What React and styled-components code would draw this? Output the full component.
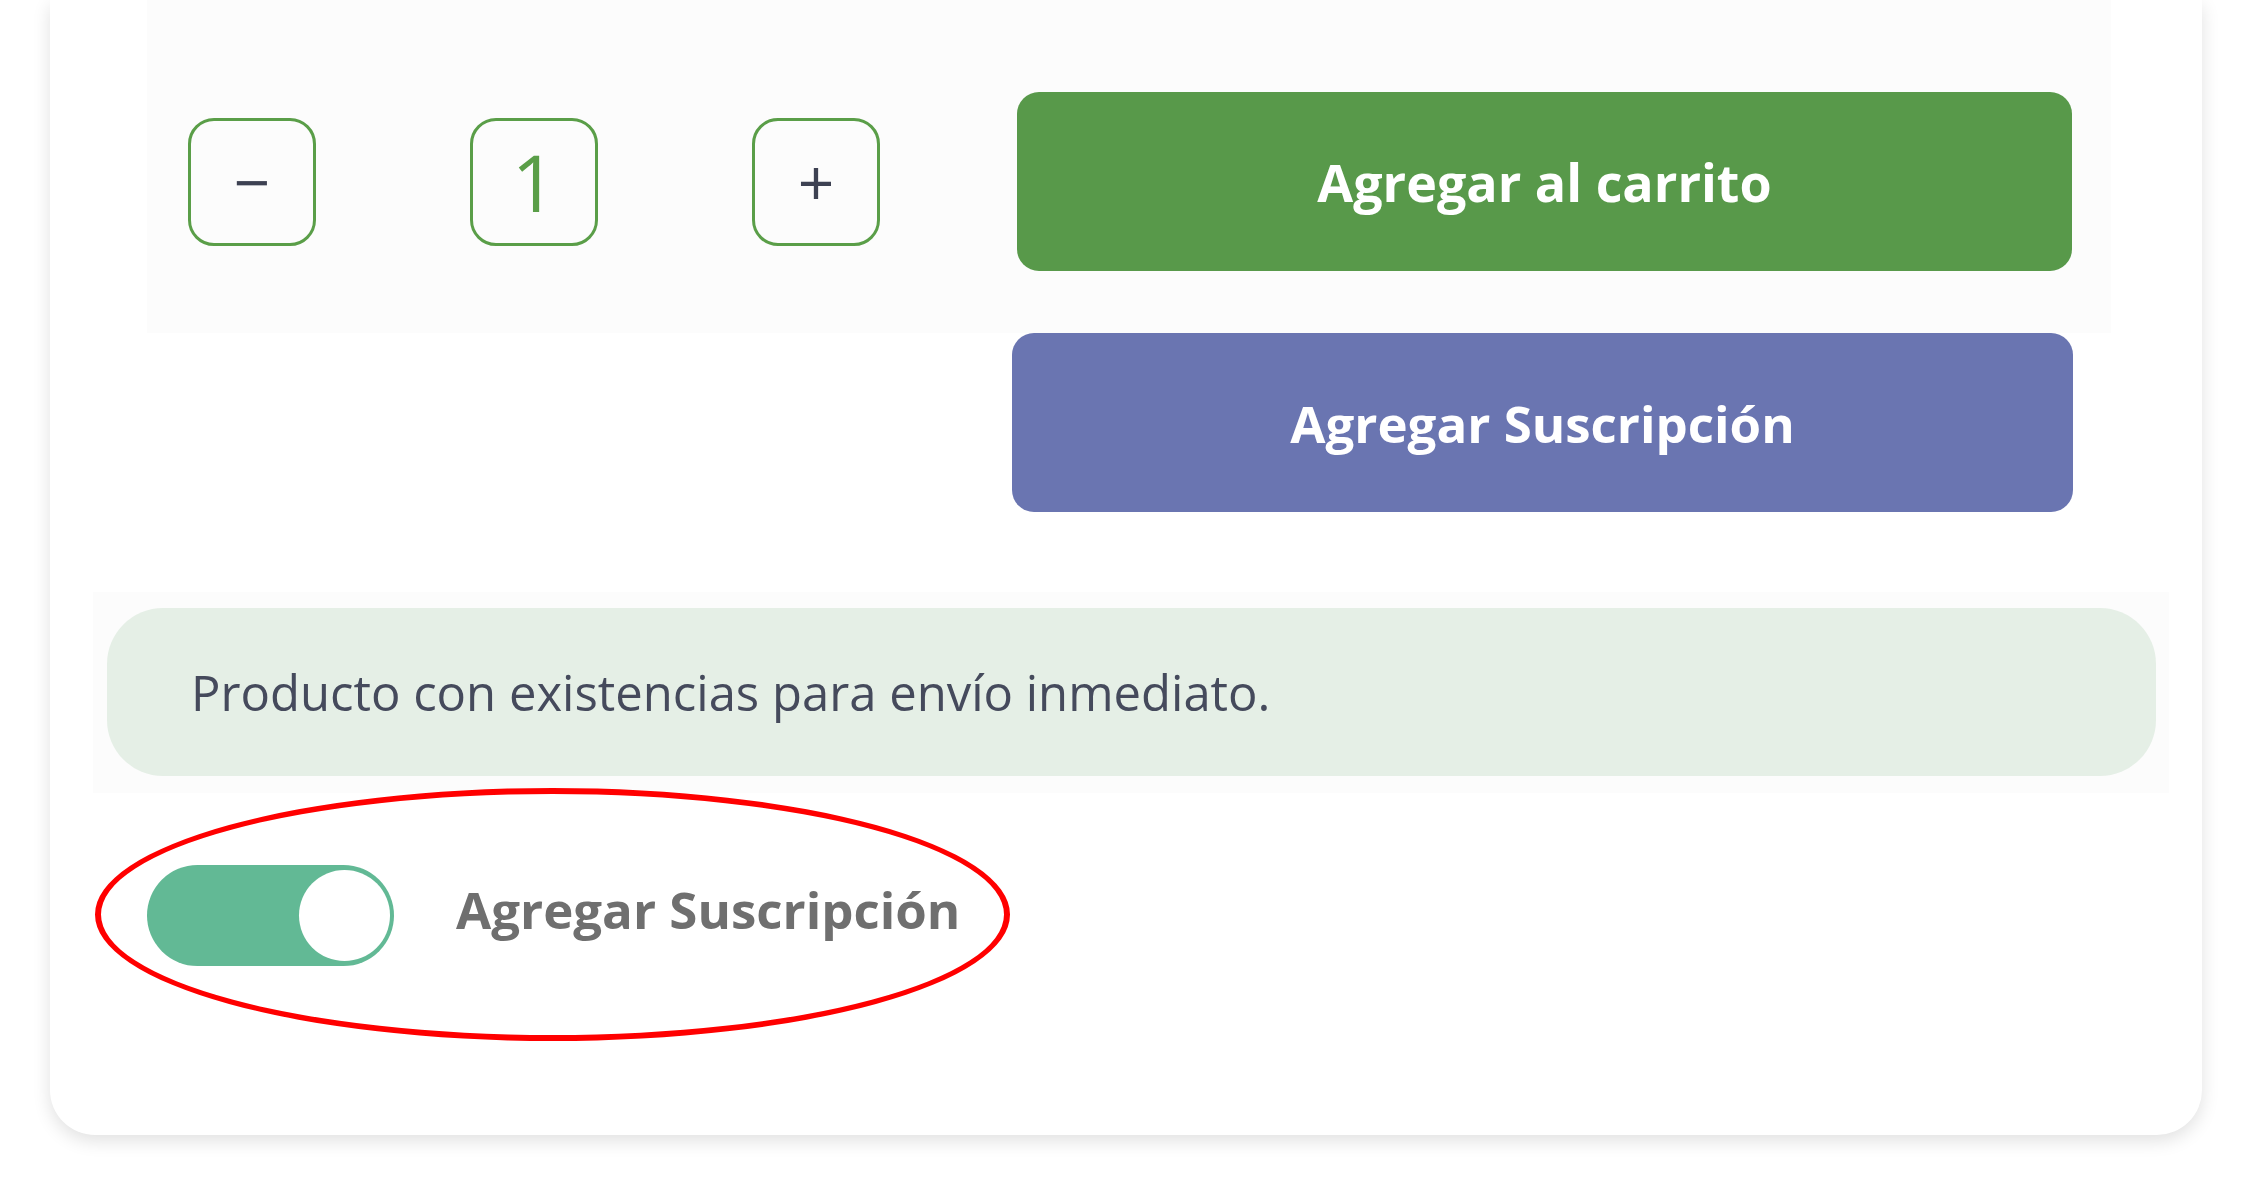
import React from 'react';
import styled, { createGlobalStyle } from 'styled-components';

const GlobalStyle = createGlobalStyle`
  body {
    margin: 0;
    background: #fff;
    font-family: "Open Sans", "Liberation Sans", sans-serif;
  }
`;

const Page = styled.div`
  width: 2258px;
  height: 1200px;
  overflow: hidden;
  background: #fff;
`;

const Card = styled.div`
  position: relative;
  margin-left: 50px;
  width: 2152px;
  padding-bottom: 169px;
  background: #fff;
  border-radius: 0 0 45px 45px;
  box-shadow: 0 6px 18px rgba(0, 0, 0, 0.12);
`;

const TopPanel = styled.div`
  margin-left: 97px;
  width: 1964px;
  height: 333px;
  box-sizing: border-box;
  padding: 92px 39px 0 41px;
  background: #fcfcfc;
  display: flex;
  align-items: flex-start;
`;

const QtyRow = styled.div`
  height: 179px;
  display: flex;
  align-items: center;
  gap: 154px;
`;

const QtyBox = styled.div`
  width: 128px;
  height: 128px;
  box-sizing: border-box;
  border: 3px solid #5a9e48;
  border-radius: 26px;
  display: flex;
  align-items: center;
  justify-content: center;
  color: ${p => (p.$value ? '#5a9e48' : '#3d4152')};
  font-size: ${p => (p.$value ? '78px' : '64px')};
  font-weight: 400;
  line-height: 1;
`;

const Button = styled.button`
  width: ${p => p.$width}px;
  height: 179px;
  border: none;
  border-radius: 22px;
  background: ${p => p.$bg};
  color: #fff;
  font-family: "Open Sans", "Liberation Sans", sans-serif;
  font-weight: 700;
  font-size: ${p => p.$size}px;
  display: flex;
  align-items: center;
  justify-content: center;
  padding: 0;
`;

const CartButton = styled(Button)`
  margin-left: auto;
`;

const SubRow = styled.div`
  display: flex;
  justify-content: flex-end;
  padding-right: 129px;
`;

const InfoOuter = styled.div`
  margin: 80px 0 0 43px;
  width: 2076px;
  box-sizing: border-box;
  padding: 16px 13px 17px 14px;
  background: #fcfcfc;
`;

const InfoBox = styled.div`
  height: 168px;
  box-sizing: border-box;
  padding-left: 84px;
  border-radius: 56px;
  background: #e5efe6;
  display: flex;
  align-items: center;
  color: #454a5c;
  font-size: 49px;
`;

const ToggleRow = styled.div`
  margin-top: 72px;
  padding-left: 97px;
  display: flex;
  align-items: center;
  gap: 62px;
`;

const Switch = styled.div`
  width: 247px;
  height: 101px;
  box-sizing: border-box;
  border-radius: 51px;
  background: #62b995;
  display: flex;
  align-items: center;
  justify-content: flex-end;
  padding-right: 4px;
`;

const Knob = styled.div`
  width: 91px;
  height: 91px;
  border-radius: 50%;
  background: #fff;
`;

const ToggleLabel = styled.span`
  color: #6f6f6f;
  font-weight: 700;
  font-size: 51px;
  margin-bottom: 14px;
`;

const Highlight = styled.div`
  position: absolute;
  left: 45px;
  top: 788px;
  width: 915px;
  height: 253px;
  box-sizing: border-box;
  border: 6px solid #ff0000;
  border-radius: 50%;
  pointer-events: none;
`;

export default function App() {
  return (
    <Page>
      <GlobalStyle />
      <Card>
        <TopPanel>
          <QtyRow>
            <QtyBox>−</QtyBox>
            <QtyBox $value>1</QtyBox>
            <QtyBox>+</QtyBox>
          </QtyRow>
          <CartButton $width={1055} $bg="#58994a" $size={52}>
            Agregar al carrito
          </CartButton>
        </TopPanel>
        <SubRow>
          <Button $width={1061} $bg="#6a75b1" $size={51}>
            Agregar Suscripción
          </Button>
        </SubRow>
        <InfoOuter>
          <InfoBox>Producto con existencias para envío inmediato.</InfoBox>
        </InfoOuter>
        <ToggleRow>
          <Switch>
            <Knob />
          </Switch>
          <ToggleLabel>Agregar Suscripción</ToggleLabel>
        </ToggleRow>
        <Highlight />
      </Card>
    </Page>
  );
}
